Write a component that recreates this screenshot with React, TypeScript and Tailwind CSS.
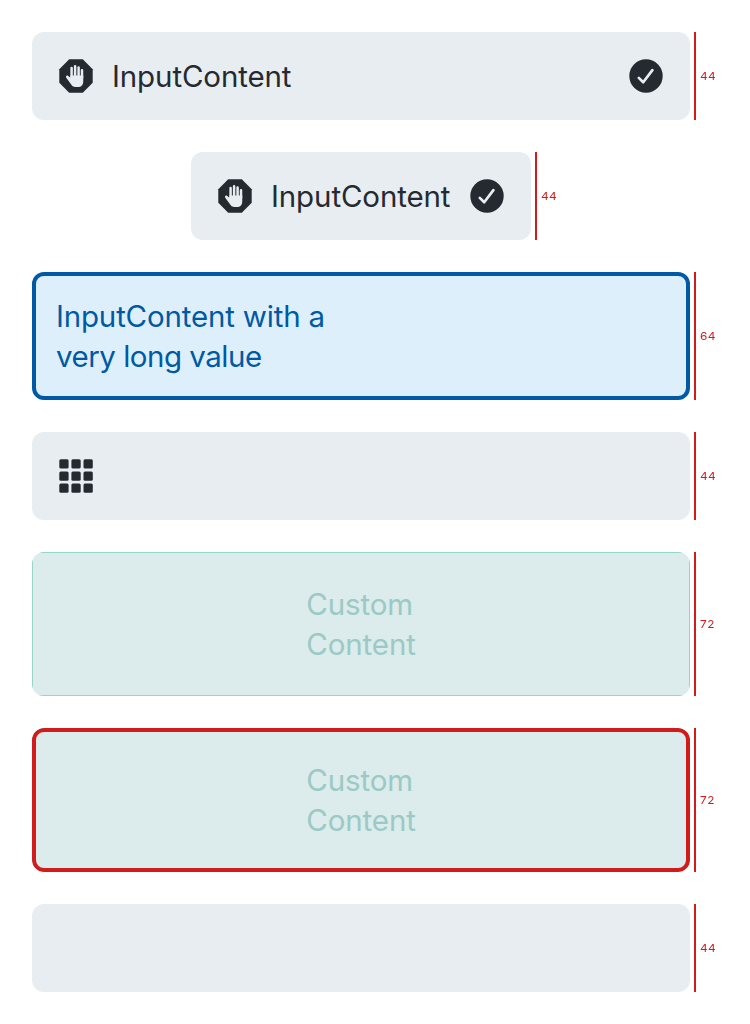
import type { ReactNode } from "react";
import clsx from "clsx";

function StopIcon() {
  return (
    <svg viewBox="0 0 40 40" className="size-10 shrink-0" aria-hidden="true">
      <path d="M13.2 3.3h13.6l9.9 9.9v13.6l-9.9 9.9H13.2l-9.9-9.9V13.2z" fill="#252a31" />
      <g fill="none" stroke="#e8edf1" strokeLinecap="round" strokeWidth="2.5">
        <path d="M15.6 22V12M19.1 21V10.2M22.6 21V11.4M26 22V14.2" />
      </g>
      <path
        d="M14.35 19.6l12.9-.2v5.6c0 4-1.8 6-5.6 6h-1.8c-2.6 0-4.1-1.3-5.2-3.3l-4.4-5.9c-1-1.9.6-3 2-1.9l2.1 1.9z"
        fill="#e8edf1"
      />
    </svg>
  );
}

function CheckIcon() {
  return (
    <svg viewBox="0 0 40 40" className="size-10 shrink-0" aria-hidden="true">
      <circle cx="20" cy="20" r="16.7" fill="#252a31" />
      <path d="M12.8 21.9l4.4 4.3 9.2-12.1" fill="none" stroke="#e8edf1" strokeWidth="2.7" strokeLinecap="round" strokeLinejoin="round" />
    </svg>
  );
}

function GridIcon() {
  const steps = [3.3, 15.4, 27.5];
  return (
    <svg viewBox="0 0 40 40" className="size-10 shrink-0" fill="#252a31" aria-hidden="true">
      {steps.map((y) => steps.map((x) => <rect key={`${x}-${y}`} x={x} y={y} width="9.3" height="9.3" rx="1.5" />))}
    </svg>
  );
}

function Measured({ size, center, children }: { size: number; center?: boolean; children: ReactNode }) {
  return (
    <div className={clsx("flex", center && "ml-[159px]")}>
      {children}
      <div className="ml-1 w-0.5 shrink-0 bg-[#d21c1c]" />
      <span className="ml-1 origin-left scale-x-[1.08] self-center text-[11px] leading-4 tracking-[0.4px] text-[#d21c1c] will-change-transform">{size}</span>
    </div>
  );
}

function Label({ children, className }: { children: ReactNode; className?: string }) {
  return (
    <span className={clsx("block text-[29.5px] leading-10 font-normal whitespace-pre", className ?? "tracking-[-0.12px]")}>
      {children}
    </span>
  );
}

function CustomContent() {
  return (
    <div className="flex h-full w-full items-center justify-center border border-[#97d5c9] bg-[#dcebeb] text-[#9acac5]">
      <Label>{"Custom\nContent"}</Label>
    </div>
  );
}

const box = "flex w-[658px] shrink-0 items-center overflow-hidden rounded-xl";

export default function App() {
  return (
    <main className="flex min-h-screen w-[750px] flex-col gap-8 bg-white p-8 font-['Inter',sans-serif] text-[#252a31] antialiased">
      <Measured size={44}>
        <div className={clsx(box, "h-[88px] gap-4 bg-[#e8edf1] px-6")}>
          <StopIcon />
          <Label>InputContent</Label>
          <div className="ml-auto"><CheckIcon /></div>
        </div>
      </Measured>
      <Measured size={44} center>
        <div className="flex h-[88px] w-[340px] shrink-0 items-center gap-4 rounded-xl bg-[#e8edf1] px-6">
          <StopIcon />
          <Label>InputContent</Label>
          <div className="ml-auto"><CheckIcon /></div>
        </div>
      </Measured>
      <Measured size={64}>
        <div className={clsx(box, "h-32 border-4 border-[#005aa3] bg-[#deeffc] px-5 text-[#005aa3]")}>
          <div>
            <Label className="tracking-[-0.18px]">InputContent with a</Label>
            <Label className="tracking-[-0.5px]">very long value</Label>
          </div>
        </div>
      </Measured>
      <Measured size={44}>
        <div className={clsx(box, "h-[88px] bg-[#e8edf1] px-6")}>
          <GridIcon />
        </div>
      </Measured>
      <Measured size={72}>
        <div className={clsx(box, "h-36")}><CustomContent /></div>
      </Measured>
      <Measured size={72}>
        <div className={clsx(box, "relative h-36")}>
          <CustomContent />
          <div className="pointer-events-none absolute inset-0 rounded-xl border-4 border-[#d21c1c]" />
        </div>
      </Measured>
      <Measured size={44}>
        <div className={clsx(box, "h-[88px] bg-[#e8edf1]")} />
      </Measured>
    </main>
  );
}
